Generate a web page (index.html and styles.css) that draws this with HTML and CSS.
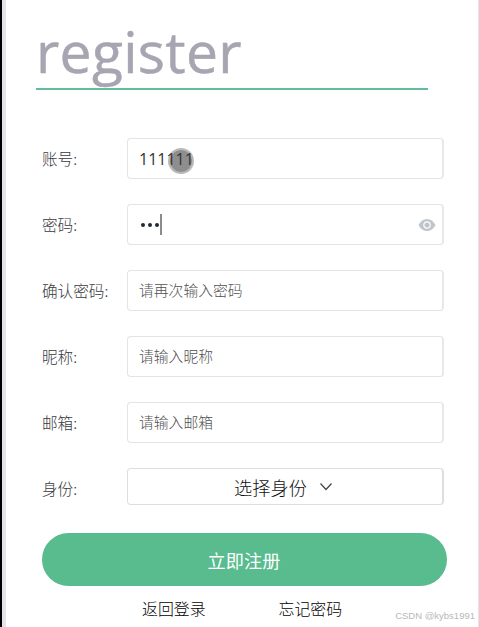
FILE: index.html
```html
<!DOCTYPE html>
<html lang="zh-CN">
<head>
<meta charset="UTF-8">
<meta name="viewport" content="width=device-width, initial-scale=1.0">
<title>register</title>
<link rel="stylesheet" href="styles.css">
</head>
<body>
<div class="panel">
  <h1 class="title">register</h1>

  <form class="form">
    <div class="form-item">
      <span class="label">账号:</span>
      <div class="input">
        <span class="value">111111</span>
        <span class="touch"></span>
      </div>
    </div>
    <div class="form-item">
      <span class="label">密码:</span>
      <div class="input">
        <span class="dots"><i></i><i></i><i></i></span>
        <span class="caret"></span>
        <svg class="eye" width="18" height="14" viewBox="0 0 18 14">
          <path fill="#c0c4cc" d="M0.5 7C2.6 3 5.5 1 9 1s6.4 2 8.500 6c-2.100 4-5 6-8.500 6S2.600 11 .5 7z"/>
          <circle cx="9" cy="7" r="3.2" fill="#c0c4cc" stroke="#fff" stroke-width="1.2"/>
        </svg>
      </div>
    </div>
    <div class="form-item">
      <span class="label">确认密码:</span>
      <div class="input"><span class="placeholder">请再次输入密码</span></div>
    </div>
    <div class="form-item">
      <span class="label">昵称:</span>
      <div class="input"><span class="placeholder">请输入昵称</span></div>
    </div>
    <div class="form-item">
      <span class="label">邮箱:</span>
      <div class="input"><span class="placeholder">请输入邮箱</span></div>
    </div>
    <div class="form-item">
      <span class="label">身份:</span>
      <div class="input select">
        <span>选择身份</span>
        <svg width="14" height="10" viewBox="0 0 14 10">
          <path d="M1.5 1.5L7 7.5l5.500-6" fill="none" stroke="#444" stroke-width="1.2"/>
        </svg>
      </div>
    </div>
    <button class="submit" type="button">立即注册</button>
  </form>

  <div class="links">
    <a>返回登录</a>
    <a>忘记密码</a>
  </div>
  <span class="watermark">CSDN @kybs1991</span>
</div>
</body>
</html>
```
FILE: styles.css
```css
* {
  box-sizing: border-box;
}
body {
  margin: 0;
  background-color: #000;
  font-family: "Noto Sans CJK SC", sans-serif;
}
.panel {
  position: relative;
  height: 627px;
  margin-left: 2px;
  border-left: 4px solid #e3e3e9;
  border-right: 1px solid #e4e4e4;
  background-color: #fff;
  overflow: hidden;
}
.title {
  width: 392px;
  height: 90px;
  margin: 0 0 48px 30px;
  padding-top: 12px;
  border-bottom: 2px solid #62bd98;
  font-family: "Open Sans", sans-serif;
  font-size: 57px;
  font-weight: 400;
  line-height: 79px;
  letter-spacing: 0.3px;
  color: #a6a5b1;
  -webkit-text-stroke: 0.5px #a6a5b1;
}
.form {
  margin-left: 36px;
}
.form-item {
  display: flex;
  align-items: center;
  height: 41px;
  margin-bottom: 25px;
}
.label {
  width: 85px;
  padding-bottom: 2px;
  font-size: 15.6px;
  font-weight: 300;
  line-height: 38px;
  color: #38393e;
}
.input {
  position: relative;
  display: flex;
  align-items: center;
  width: 317px;
  height: 41px;
  padding-left: 11px;
  border: 1px solid #e4e4e6;
  border-right: 2px solid #e8e8ea;
  border-radius: 4px;
}
.value {
  font-family: "Open Sans", sans-serif;
  font-size: 16px;
  color: #333;
}
.placeholder {
  padding-bottom: 2px;
  font-size: 14.8px;
  font-weight: 300;
  line-height: 37px;
  color: #505050;
}
/* Touch pointer over the account field */
.touch {
  position: absolute;
  left: 40px;
  top: 9px;
  width: 26px;
  height: 26px;
  border: 2px solid rgba(80, 80, 80, 0.4);
  border-radius: 50%;
  background-color: rgba(50, 50, 50, 0.55);
  background-clip: padding-box;
}
.dots {
  display: flex;
  gap: 3px;
  margin: 0 1px 0 2px;
}
.dots i {
  width: 4px;
  height: 4px;
  border-radius: 50%;
  background-color: #222a38;
}
.caret {
  width: 2px;
  height: 21px;
  background-color: #8c8c90;
}
.eye {
  margin-left: auto;
  margin-right: 6px;
}
.select {
  justify-content: center;
  gap: 12px;
  height: 37px;
  padding: 0 3px 0 0;
  border-color: #dcdfe0;
  font-size: 18.2px;
  font-weight: 300;
  line-height: 34px;
  color: #111;
}
.form-item:nth-child(6) {
  height: 37px;
  margin-bottom: 28px;
}
.form-item:nth-child(6) .label {
  padding: 2px 0 0;
}
.submit {
  display: block;
  width: 405px;
  height: 53px;
  padding: 1px 1px 0 0;
  border: none;
  border-radius: 27px;
  background-color: #58bc8f;
  font-family: inherit;
  font-size: 18.2px;
  line-height: 51px;
  color: #fff;
}
.links {
  display: flex;
  gap: 73px;
  margin: 11px 0 0 136px;
  font-size: 15.9px;
  font-weight: 300;
  line-height: 24px;
  color: #000;
}
.watermark {
  position: absolute;
  right: 3px;
  bottom: 4px;
  font-family: "Liberation Sans", sans-serif;
  font-size: 9.5px;
  line-height: 14px;
  color: #b8b8b8;
}
```
